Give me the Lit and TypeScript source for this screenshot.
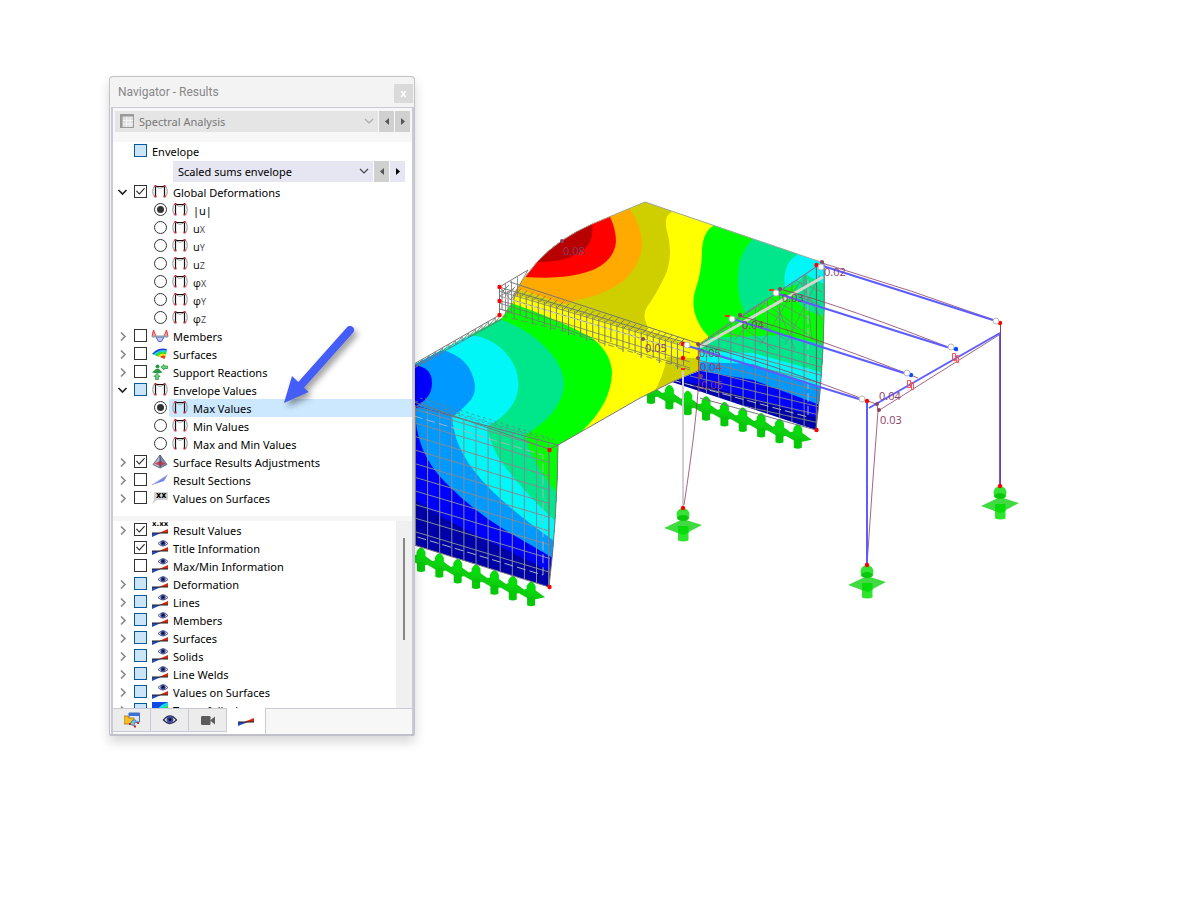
import { LitElement, html, svg, css, nothing } from "lit";
import { customElement } from "lit/decorators.js";
import { classMap } from "lit/directives/class-map.js";

type Kind = "frame" | "members" | "surfaces" | "support" | "pyramid" | "section" | "valuesxx" | "xxx" | "eye" | "rainbow";
interface Row {
  text: string;
  sub?: string;
  icon: Kind;
  open?: boolean;
  leaf?: boolean;
  radio?: string;
  state?: "on" | "off" | "mixed";
  selected?: boolean;
}

const upper: Row[] = [
  { text: "Global Deformations", icon: "frame", open: true, state: "on" },
  { text: "|u|", icon: "frame", radio: "deformation", state: "on" },
  { text: "u", sub: "X", icon: "frame", radio: "deformation" },
  { text: "u", sub: "Y", icon: "frame", radio: "deformation" },
  { text: "u", sub: "Z", icon: "frame", radio: "deformation" },
  { text: "φ", sub: "X", icon: "frame", radio: "deformation" },
  { text: "φ", sub: "Y", icon: "frame", radio: "deformation" },
  { text: "φ", sub: "Z", icon: "frame", radio: "deformation" },
  { text: "Members", icon: "members" },
  { text: "Surfaces", icon: "surfaces" },
  { text: "Support Reactions", icon: "support" },
  { text: "Envelope Values", icon: "frame", open: true, state: "mixed" },
  { text: "Max Values", icon: "frame", radio: "envelope", state: "on", selected: true },
  { text: "Min Values", icon: "frame", radio: "envelope" },
  { text: "Max and Min Values", icon: "frame", radio: "envelope" },
  { text: "Surface Results Adjustments", icon: "pyramid", state: "on" },
  { text: "Result Sections", icon: "section" },
  { text: "Values on Surfaces", icon: "valuesxx" },
];

const lower: Row[] = [
  { text: "Result Values", icon: "xxx", state: "on" },
  { text: "Title Information", icon: "eye", state: "on", leaf: true },
  { text: "Max/Min Information", icon: "eye", leaf: true },
  { text: "Deformation", icon: "eye", state: "mixed" },
  { text: "Lines", icon: "eye", state: "mixed" },
  { text: "Members", icon: "eye", state: "mixed" },
  { text: "Surfaces", icon: "eye", state: "mixed" },
  { text: "Solids", icon: "eye", state: "mixed" },
  { text: "Line Welds", icon: "eye", state: "mixed" },
  { text: "Values on Surfaces", icon: "eye", state: "mixed" },
  { text: "Type of display", icon: "rainbow", state: "mixed" },
];

const eye = svg`
  <path d="M6 3.500 Q11 -2 16 3.500 Q11 8.500 6 3.500Z" fill="#dfe3f4" stroke="#4a4d74" stroke-width=".9"/>
  <circle cx="11" cy="3.200" r="2.600" fill="#3a4aa0"/><circle cx="11" cy="3.200" r="1.300" fill="#11142e"/>`;
const wedges = svg`
  <path d="M0 11 H9 L0 15Z" fill="#2747b5"/><path d="M16 7 V11 H7Z" fill="#d6270e"/>
  <path d="M0 11 H16" stroke="#222" stroke-width="1"/>`;

const glyphs: Record<Kind, unknown> = {
  frame: svg`
    <path d="M2.500 2 Q-1 7.500 2.500 13 M13.500 2 Q17 7.500 13.500 13" fill="none" stroke="#8f8f8f"/>
    <path d="M4 2.500 Q8 6 12 2.500" fill="none" stroke="#999"/>
    <path d="M3.500 13 V2.500 H12.500 V13" fill="none" stroke="#111" stroke-width="1.200"/>
    <path d="M2.500 1h2v2h-2zM11.500 1h2v2h-2zM2.500 11.500h2v2h-2zM11.500 11.500h2v2h-2z" fill="#c9272d"/>`,
  members: svg`
    <path d="M0 8.500 L1.500 2 L4 8.500Z M16 8.500 L14.500 2 L12 8.500Z" fill="#f7b0b0" stroke="#ef2c2c"/>
    <path d="M4 9 Q8 19 12 9Z" fill="#c3c8fa" stroke="#4a55e8"/>
    <path d="M0 8.500H16" stroke="#8aa0ad" stroke-width="2"/>`,
  surfaces: svg`
    <path d="M0 8 Q6 1 15 3 L14 6 Q8 3 5 9Z" fill="#2340e0"/>
    <path d="M1 8.500 Q8 2.500 15 4.500 L14 7.500 Q8 5 6 10Z" fill="#18d7d8"/>
    <path d="M3 9 Q9 4 14.500 6.500 L13.500 9.500 Q9 7 7 11Z" fill="#3ddc2c"/>
    <path d="M6 10 Q10 6.500 14 8.500 L13 11 Q10 9 8 11Z" fill="#f6e51c"/>
    <path d="M8 11 Q11 8.500 13.500 10.500 L12.500 13Z" fill="#ee3a1c"/>`,
  support: svg`
    <circle cx="5.500" cy="2.500" r="2" fill="#2b9a45"/><path d="M0 8.500 L4 5 H7 L10.500 8.500 L5.500 9.500Z" fill="#2b9a45"/>
    <path d="M5 9.500 L2 12.500 H3.500 V15.500 H6.500 V12.500 H8Z" fill="#5edb76" stroke="#268a3b" stroke-width=".7"/>
    <path d="M9 3 L12 .5 V2 H15.500 V4.500 H12 V6Z" fill="#5edb76" stroke="#268a3b" stroke-width=".7"/>`,
  pyramid: svg`
    <path d="M8 1 L1 10.500 L8 14 L15 10.500Z" fill="#b4bad0" stroke="#48506e" stroke-width=".8"/>
    <path d="M8 1 V14 L15 10.500Z" fill="#7b83a3"/><path d="M2.500 9.500 L8 7 L13.500 9.500 L8 12Z" fill="#d3343c" opacity=".85"/>
    <path d="M8 1V14" stroke="#333a55" stroke-width=".8"/>`,
  section: svg`<path d="M0 13 L15.500 3 L12 9Z" fill="#7482f5"/><path d="M0 13 L15.500 3" stroke="#a8b1c8"/>`,
  valuesxx: svg`
    <path d="M2 2H16V10H5L0 14 L2 9Z" fill="#d2d2d2"/>
    <text x="4" y="8" font-family="DejaVu Sans, sans-serif" font-weight="bold" font-size="8">xx</text>`,
  xxx: svg`
    <text x="0" y="4" font-family="DejaVu Sans, sans-serif" font-weight="bold" font-size="7">x.xx</text>
    ${wedges}`,
  eye: svg`${eye}${wedges}`,
  rainbow: svg`
    <rect width="16" height="16" fill="#1248e8"/><path d="M2 16 Q4 4 16 0 V16Z" fill="#17d8e8"/>
    <path d="M5 16 Q8 6 16 4 V16Z" fill="#2ae32a"/><path d="M10 16 Q11 10 16 9 V16Z" fill="#f2e21a"/>`,
};

const icon = (k: Kind) => html`<svg class="icon" viewBox="0 0 16 16" aria-hidden="true">${glyphs[k]}</svg>`;

@customElement("results-tree")
class ResultsTree extends LitElement {
  static properties = { rows: { attribute: false } };
  declare rows: Row[];

  static styles = css`
    :host { display: block; }
    ul { list-style: none; margin: 0; padding: 0; }
    li { display: flex; align-items: center; height: 18px; padding-left: 2px; }
    li.child { padding-left: 41px; }
    .twist { width: 14px; height: 18px; margin-right: 5px; padding: 0; border: 0; background: none; flex: none; display: grid; place-items: center; color: #8a8a8a; }
    .twist.open { color: #222; }
    .twist svg { width: 11px; height: 11px; fill: none; stroke: currentColor; stroke-width: 1.7; }
    input { appearance: none; box-sizing: border-box; flex: none; width: 13px; height: 13px; margin: 0 2px 1px 0; border: 1px solid #333; background: #fff; display: grid; place-items: center; }
    input.mixed { background: #cce4f7; border-color: #005a9e; }
    input[type="checkbox"]:checked::before { content: ""; width: 9px; height: 8px; background: #222; clip-path: polygon(0 48%, 10% 38%, 36% 72%, 92% 4%, 100% 12%, 37% 92%); }
    input[type="radio"] { border-radius: 50%; }
    input[type="radio"]:checked::before { content: ""; width: 7px; height: 7px; border-radius: 50%; background: #333; }
    label { display: flex; align-items: center; gap: 5px; flex: 1; height: 18px; padding-left: 3px; white-space: nowrap; }
    .selected label { background: #cce8ff; border-radius: 2px 0 0 2px; }
    .icon { width: 16px; height: 16px; flex: none; overflow: visible; }
    .text { padding-top: 2px; line-height: 16px; }
    .symbol { font-family: "Open Sans", "Noto Sans", sans-serif; }
    .small { font-size: 9px; color: #444; }
  `;

  render() {
    return html`<ul>${this.rows.map((r, i) => html`
      <li class=${classMap({ child: !!r.radio, selected: !!r.selected })}>
        ${r.radio ? nothing : r.leaf ? html`<span class="twist"></span>` : html`
          <button class=${classMap({ twist: true, open: !!r.open })} aria-label=${(r.open ? "Collapse " : "Expand ") + r.text}>
            <svg viewBox="0 0 11 11"><path d=${r.open ? "M1.500 3 L5.500 7 L9.500 3" : "M4 1.500 L8 5.500 L4 9.500"}/></svg>
          </button>`}
        <input id=${"row" + i} type=${r.radio ? "radio" : "checkbox"} name=${r.radio ?? "item" + i}
          class=${classMap({ mixed: r.state === "mixed" })} .checked=${r.state === "on"} .indeterminate=${r.state === "mixed"}>
        <label for=${"row" + i}>${icon(r.icon)}<span class=${classMap({ text: true, symbol: !!r.sub })}>${r.text}${r.sub ? html`<span class="small">${r.sub}</span>` : nothing}</span></label>
      </li>`)}</ul>`;
  }
}

@customElement("results-navigator")
class ResultsNavigator extends LitElement {
  static styles = css`
    :host { display: block; box-sizing: border-box; width: 306px; border: 1px solid #c3c3c6; border-bottom: 2px solid #c0c0cb; border-radius: 4px 4px 2px 2px; background: #f3f3f3; box-shadow: 0 6px 12px rgba(0,0,0,.16); font: 11px "Noto Sans", "Open Sans", sans-serif; color: #000; }
    header { display: flex; align-items: center; height: 30px; padding: 0 1px 0 8px; }
    h1 { flex: 1; margin: 0; font: 400 12px/30px Roboto, "Noto Sans", sans-serif; color: #878787; }
    .close { width: 19px; height: 19px; margin-top: 3px; padding: 0; border: 0; background: #dadada; color: #fff; font: bold 10px "Noto Sans", sans-serif; line-height: 19px; }
    .body { margin-left: 1px; border: solid #c9c9d7; border-width: 1px 2px 0; background: #fff; }
    .bar { display: flex; gap: 1px; padding: 3px 2px 10px; background: #f7f7f7; }
    .combo { position: relative; flex: 1; display: flex; background: #e5e5e5; }
    .combo select { appearance: none; flex: 1; min-width: 0; height: 21px; border: 0; border-radius: 0; background: none; font: inherit; color: #777; padding: 0 24px 1px 24px; margin: 0; opacity: 1; }
    .combo .grid { position: absolute; left: 5px; top: 3px; width: 14px; height: 14px; }
    .combo .down { position: absolute; right: 4px; top: 7px; width: 10px; height: 6px; fill: none; stroke: #aaa; stroke-width: 1.2; }
    .step { width: 15px; height: 21px; padding: 0; border: 0; background: #d0d0d0; display: grid; place-items: center; flex: none; }
    .step svg { width: 4px; height: 7px; fill: #555; }
    .envelope { display: flex; align-items: center; height: 19px; padding-left: 21px; }
    .envelope input { appearance: none; box-sizing: border-box; width: 13px; height: 13px; margin: 0 5px 2px 0; border: 1px solid #005a9e; background: #cce4f7; }
    .scaled { display: flex; gap: 1px; margin: 0 7px 1px 60px; }
    .scaled .combo, .scaled .next { background: #e6e6f2; }
    .scaled select { padding-left: 5px; color: #000; }
    .scaled .down { stroke: #444; }
    .scaled .next svg { fill: #000; }
    .upper { padding-bottom: 9px; }
    .split { height: 5px; background: #f5f5f5; }
    .lower { display: flex; height: 187px; overflow: hidden; }
    .lower results-tree { flex: 1; }
    .track { width: 16px; background: #f0f0f0; padding-top: 17px; box-sizing: border-box; display: flex; justify-content: center; }
    .thumb { width: 2px; height: 102px; background: #868686; }
    nav { display: flex; height: 26px; background: #f7f7f7; box-sizing: border-box; border-top: 1px solid #c9c9d7; }
    nav button { width: 38px; height: 23px; box-sizing: border-box; padding: 0; border: 0; border-right: 1px solid #c9c9d7; border-bottom: 1px solid #c9c9d7; background: #ececec; display: grid; place-items: center; }
    nav .active { width: 39px; margin-top: -1px; height: 26px; background: #fff; border-bottom: 0; }
    nav svg { width: 16px; height: 16px; }
  `;

  private step(dir: "prev" | "next") {
    return html`<button class="step ${dir}" aria-label=${dir === "prev" ? "Previous" : "Next"}>
      <svg viewBox="0 0 4 7"><path d=${dir === "prev" ? "M4 0V7L0 3.500Z" : "M0 0V7L4 3.500Z"}/></svg></button>`;
  }

  render() {
    const down = html`<svg class="down" viewBox="0 0 10 6"><path d="M1 1 L5 5 L9 1"/></svg>`;
    return html`
      <header><h1>Navigator - Results</h1><button class="close" aria-label="Close">x</button></header>
      <div class="body">
        <div class="bar">
          <div class="combo">
            <svg class="grid" viewBox="0 0 14 14"><rect x=".5" y=".5" width="13" height="13" fill="#dedede" stroke="#9a9a9a"/><path d="M0 1.500H14M1.500 0V14" stroke="#9a9a9a" stroke-width="2"/><path d="M6.500 3V13M10 3V13M3 6.500H13M3 10H13" stroke="#f5f5f5"/></svg>
            <select aria-label="Analysis"><option>Spectral Analysis</option></select>${down}
          </div>${this.step("prev")}${this.step("next")}
        </div>
        <div class="envelope"><input id="env" type="checkbox" .indeterminate=${true}><label for="env">Envelope</label></div>
        <div class="scaled">
          <div class="combo"><select aria-label="Envelope type"><option>Scaled sums envelope</option></select>${down}</div>
          ${this.step("prev")}${this.step("next")}
        </div>
        <results-tree class="upper" .rows=${upper}></results-tree>
        <div class="split"></div>
        <div class="lower"><results-tree .rows=${lower}></results-tree><div class="track"><div class="thumb"></div></div></div>
        <nav>
          <button aria-label="Data"><svg viewBox="0 0 16 16"><path d="M5 1H15.500V10H5Z" fill="#dbe6fb" stroke="#3f70cf"/><path d="M5 1H16V4H5Z" fill="#3f70cf"/><path d="M0 4H4L5 6H10V12H0Z" fill="#f4bd27" stroke="#a97606" stroke-width=".8"/><path d="M6 12Q10 4 14 11L11 10 10 14Z" fill="#77c3e5" stroke="#316f91" stroke-width=".7"/><path d="M5 11h2v2H5zM13 10h2v2h-2zM10 13.500h2v2h-2z" fill="#d9271b"/></svg></button>
          <button aria-label="Display"><svg viewBox="0 0 16 16"><path d="M1.500 8Q8 0 14.500 8Q8 15 1.500 8Z" fill="#e9ecf8" stroke="#2d3159" stroke-width="1.300"/><circle cx="8" cy="7.500" r="3.400" fill="#3c4b9b"/><circle cx="8" cy="7.500" r="1.500" fill="#0d1026"/></svg></button>
          <button aria-label="Views"><svg viewBox="0 0 16 16"><rect x="1" y="4" width="9.500" height="9" rx="1.200" fill="#5c5c5c"/><path d="M10 8.500 L15 4.500V12.500Z" fill="#5c5c5c"/></svg></button>
          <button class="active" aria-label="Results"><svg viewBox="0 0 16 16"><path d="M0 9H10L0 13Z" fill="#2747b5"/><path d="M16 5V9H6Z" fill="#d6270e"/><path d="M0 9H16" stroke="#222"/></svg></button>
        </nav>
      </div>`;
  }
}

const seq = (n: number) => Array.from({ length: n }, (_, i) => i);
const C = { dark: "#b80000", red: "#ff0000", orange: "#ffaa00", olive: "#cfcf00", yellow: "#ffff00", green: "#00ff00", teal: "#00e68a", cyan: "#00f7f7", sky: "#0099ff", blue: "#0000ff", navy: "#0000a8" };

const roof = "M511 308 L516 290 L525 277 L537 262 Q548 250 562 240.500 Q576 231 592 224 L645 202 L824 263 L819 266 L699 345 L690 356Z";
const front = "M414 365 L502 318 L512 302 L520 290 L600 316 L686 344 L700 350 L700 370 L672 382 L640 398 L558 445 L500 431 L414 406Z";
const wall = "M414 405 L500 430 L558 445 Q557 520 549 587 L414 545Z";
const side = "M672 382 L700 371 L699 345 L819 265 L824 263 Q826 350 816 430Z";

const line = (x1: number, y1: number, x2: number, y2: number) => svg`<path d=${`M${x1} ${y1}L${x2} ${y2}`}/>`;
const dots = (pts: number[][], color: string, r: number) =>
  pts.map(([x, y]) => svg`<circle cx=${x} cy=${y} r=${r} fill=${color}/>`);
const seat = (x: number, y: number) => svg`
  <path d=${`M${x - 14} ${y + 6}L${x} ${y + 1}L${x + 14} ${y + 11}L${x} ${y + 14}Z`} fill="#0fce12"/>
  <path d=${`M${x - 4} ${y + 10}h8v9q-4 2-8 0Z`} fill="#04c808"/>
  <path d=${`M${x - 4.5} ${y}q4.500-9 9 0v6q-4.500 3-9 0Z`} fill="#06da0a"/>`;
const foot = (x: number, y: number) => svg`
  <path d=${`M${x - 19} ${y + 20}L${x} ${y + 11}L${x + 19} ${y + 17}L${x} ${y + 27}Z`} fill="#42da42"/>
  <ellipse cx=${x} cy=${y + 6.5} rx="6.500" ry="6.500" fill="#35e335"/><ellipse cx=${x} cy=${y + 10} rx="6" ry="3" fill="#0ac80c"/>
  <path d=${`M${x - 5} ${y + 18}h10.500v14.500q-5 2-10.500 0Z`} fill="#2ee52e"/><path d=${`M${x - 5} ${y + 18}h10.500v7l-5 2-5.500-2Z`} fill="#06dc09"/>`;

@customElement("model-view")
class ModelView extends LitElement {
  static styles = css`
    :host { display: block; }
    .scene { display: block; width: 100%; height: 100vh; }
    .tag { font: 11px "Open Sans", "Noto Sans", sans-serif; fill: #8d3c66; }
  `;

  render() {
    const tags: [string, number, number][] = [
      ["0.08", 563, 255], ["0.02", 824, 276], ["0.03", 782, 302], ["0.04", 742, 329], ["0.05", 645, 352],
      ["0.05", 699, 357], ["0.04", 700, 371], ["0.05", 701, 389], ["0.04", 879, 400], ["0.03", 880, 424],
    ];
    return html`<svg class="scene" viewBox="0 0 1200 900" preserveAspectRatio="xMinYMin meet" role="img" aria-label="Deformed structural model">
      <defs>
        <clipPath id="roof"><path d=${roof}/></clipPath><clipPath id="front"><path d=${front}/></clipPath>
        <clipPath id="wall"><path d=${wall}/></clipPath><clipPath id="side"><path d=${side}/></clipPath>
      </defs>
      ${seq(9).map((i) => seat(651 + 18.35 * i, 384 + 5.6 * i))}
      ${seq(7).map((i) => seat(421 + 18.35 * i, 552 + 5.7 * i))}

      <g clip-path="url(#side)">
        <rect x="660" y="250" width="180" height="190" fill=${C.navy}/>
        <path d="M660 250H840V423L816 417L715 388L660 376Z" fill=${C.blue}/>
        <path d="M660 250H840V412L820 405L753 380L700 371Z" fill=${C.sky}/>
        <path d="M660 250H840V392L822 387L753 364L700 362Z" fill=${C.cyan}/>
        <path d="M660 250H840V379L823 373L800 366L753 353L700 351Z" fill=${C.teal}/>
        <path d="M700 338L783 335L824 344V316Q806 312 798 302Q792 292 797 284L760 300L740 313L707 336Z" fill=${C.green}/>
        <path d="M797 283L805 274L826 285V263L800 270Z" fill=${C.cyan}/>
      </g>

      <g clip-path="url(#roof)">
        <rect x="500" y="195" width="330" height="165" fill=${C.cyan}/>
        <path d="M500 195H797V255Q782 264 785 287L790 360H500Z" fill=${C.teal}/>
        <path d="M500 195H752V240Q738 254 738 277Q737 297 745 314V360H500Z" fill=${C.green}/>
        <path d="M500 195H713V226Q703 232 702 250Q702 268 697 285Q691 300 695 314Q699 327 708 336V360H500Z" fill=${C.yellow}/>
        <path d="M500 195H672V212Q663 216 667 231Q674 255 665 276Q654 298 647 307Q642 315 647 325V342H500Z" fill=${C.olive}/>
        <path d="M500 195H630V209Q643 228 642 247Q639 268 622 282Q602 296 577 300L560 306H500Z" fill=${C.orange}/>
        <path d="M525 277Q570 280 595 269Q614 260 616 242Q616 229 610 217V200H500V277Z" fill=${C.red}/>
        <path d="M536 262Q562 263 579 253Q595 244 592 224V200H500V262Z" fill=${C.dark}/>
      </g>

      <g clip-path="url(#front)">
        <rect x="410" y="280" width="300" height="180" fill=${C.yellow}/>
        <path d="M514 282L700 342V350L650 335L517 295Z" fill=${C.olive}/>
        <path d="M667 357L700 358V375L652 396Q664 375 667 357Z" fill=${C.olive}/>
        <path d="M511 303Q560 320 592 338Q611 352 612 373Q611 404 582 431L560 450H410V303Z" fill=${C.green}/>
        <path d="M502 320Q530 330 548 350Q564 367 564 386Q561 413 527 434L510 450H410V320Z" fill=${C.teal}/>
        <path d="M477 336Q500 342 511 360Q520 373 518 390Q514 412 488 426L470 440H410V336Z" fill=${C.cyan}/>
        <path d="M446 351Q466 358 472 374Q480 393 467 404Q460 412 452 417H410V351Z" fill=${C.sky}/>
        <path d="M414 365Q432 367 432 383Q432 399 414 407Z" fill=${C.blue}/>
      </g>

      <g clip-path="url(#wall)">
        <rect x="410" y="400" width="150" height="190" fill=${C.navy}/>
        <path d="M410 395V496Q450 524 493 543L560 576V395Z" fill=${C.blue}/>
        <path d="M415 408Q415 452 445 482Q472 510 505 530L560 562V395Z" fill=${C.sky}/>
        <path d="M452 415Q453 444 475 472Q498 502 560 545V395Z" fill=${C.cyan}/>
        <path d="M488 425Q489 446 503 464Q527 496 560 525V395Z" fill=${C.teal}/>
        <path d="M525 436Q533 464 560 497V395Z" fill=${C.green}/>
        <g stroke="#838b93" stroke-width="1" fill="none">
          ${seq(12).map((i) => line(415.5 + 12.1 * i, 400, 415.5 + 12.1 * i, 590))}
          ${seq(10).map((i) => line(414, 409 + 13.600 * i, 550, 449 + 13.700 * i))}
        </g>
        <path d="M414 416L543 455V575L414 536" fill="none" stroke="#aab2ba" stroke-dasharray="9 4"/>
      </g>

      <g clip-path="url(#side)" fill="none" stroke="#7d8087">
        ${seq(10).map((i) => line(706.5 + 12.2 * i, 250, 706.5 + 12.2 * i, 440))}
        ${seq(9).map((i) => line(690, 322 + 9 * i, 824, 360 + 8 * i))}
        <path d="M732 320L775 350M745 313L786 340M758 306L798 330M770 298L810 320M784 290L820 305M795 280L822 292M735 340L765 303L822 345M760 345L800 282L822 320M785 345L820 275M775 300L795 350M805 272L812 340" stroke-width=".8"/>
        <path d="M672 380L808 417V280" stroke="#b0b5bb" stroke-dasharray="9 4"/>
        <path d="M816.500 265V430" stroke="#705f68"/>
      </g>

      <g fill="none" stroke="#77777a" stroke-width="1">
        <path d="M525 277L537 262Q548 250 562 240.500Q576 231 592 224L645 202L824 263" stroke="#a8a8a0"/>
        <path d="M700 370L672 382L640 398L558 445L414 406M558 445Q557 520 549 587L414 545M824 263Q826 350 816 430L700 398M699 345L819 265"/>
        <path d="M414 402L549 449L558 445M549 449V587M499.500 287V315L414 364M499.500 287L528 270M502 319L414 368"/>
        ${seq(13).map((i) => svg`<path d=${`M${416 + 6.6 * i} ${363 - 3.75 * i}l0 4l6.600 -7.700`} stroke-width=".8"/>`)}
        <path d="M499.500 287L511 300L528 270M505.500 284V316M511.500 281V314M517.500 277V296M499.500 296L514 289M499.500 301L513 304M499.500 309L511 312" stroke-width=".8"/>
        <path d="M499 287L690 344M510 282L700 344" />
        <path d="M499 291L690 348M499 296L690 353M499 303L690 362M500 309L690 368" stroke-width=".8"/>
        <path d="M502 316L560 330 690 370" stroke-dasharray="6 4" stroke-width=".8"/>
        ${seq(31).map((i) => line(502 + 6.050 * i, 289 + 1.850 * i, 502 + 6.050 * i, Math.round(309 + 1.85 * i + (i % 3) * 3)))}
        ${seq(30).map((i) => line(503 + 6.050 * i, 291 + 1.850 * i, 509 + 6.050 * i, 285 + 1.850 * i))}
        <path d="M505 298L683 351" stroke="#d7d7c9" stroke-dasharray="5 2"/>
      </g>
      <g fill="none" stroke="#777d86" stroke-width=".7" stroke-dasharray="3 3">
        <path d="M415 401L550 440M420 398L556 440M418 404L540 438M425 398L460 414"/>
        ${seq(11).map((i) => line(417 + 12 * i, 407 + 3.400 * i, 424 + 12 * i, 402 + 3.400 * i))}
      </g>

      <path d="M683 371V508" stroke="#d0d0d0" stroke-width="2"/><path d="M700 347L823 277" stroke="#d6d6ce" stroke-width="3"/>
      <g fill="none" stroke="#8b3e64" stroke-width=".8">
        <path d="M822 263Q912 290 1000 322M780 289Q850 308 958 351M740 316Q810 335 918 378M698 344Q770 363 876 404"/>
        <path d="M878 411L999 335M877 404L878 411Q872 490 867 565M698 345L699 375Q697 420 684 505M699 345V392"/>
        <path d="M699 344L732 321L777 293L822 263" stroke="#91727e"/>
      </g>
      <g fill="none" stroke="#5d5dff" stroke-width="2">
        <path d="M823 266L996 321M776 293L950 348M733 319L907 374M688 346L862 400M869 408L1000 333M867 402V565"/>
        <path d="M1000 333V486"/>
      </g>
      <path d="M1000.500 323V486" stroke="#8b3e64"/>
      <g fill="none" stroke="#ff5050"><path d="M952.500 353.500h3v7h-3zM956.500 355.500h2v7h-2zM907.500 380.500h3v7h-3zM911.500 382.500h2v7h-2z"/></g>
      ${dots([[822, 262], [780, 289], [740, 315], [698, 344], [698, 358], [701, 376], [562, 241], [643, 339], [877, 404], [879, 410]], "#8b4360", 2)}
      ${foot(683, 508)}${foot(867, 565)}${foot(1000, 486)}
      ${dots([[499.500, 287], [499.500, 301], [499.500, 315], [683, 344], [683, 358], [816.500, 265], [816.500, 430], [549.500, 450], [549.500, 587], [683, 508], [867, 401], [867, 565], [1000, 323], [1000, 486]], "#ff0000", 2.2)}
      <path d="M769 290h5M725 316h5M681 369h4" stroke="#ff2a00" stroke-width="2"/>
      ${dots([[956, 349], [911, 375]], "#0848ff", 2.2)}
      <g stroke="#b8b8b8">${dots([[821, 267], [776, 293], [732, 319], [687, 345], [996, 321], [951, 347], [907, 373], [862, 399]], "#ffffff", 3)}</g>
      ${tags.map(([t, x, y]) => svg`<text class="tag" x=${x} y=${y}>${t}</text>`)}
    </svg>`;
  }
}

@customElement("app-root")
class AppRoot extends LitElement {
  static styles = css`
    :host { display: block; position: relative; min-height: 100vh; background: #fff; overflow: hidden; }
    .panel { position: absolute; left: 109px; top: 76px; }
    .pointer { position: absolute; left: 274px; top: 316px; width: 96px; height: 100px; filter: drop-shadow(3px 4px 3px rgba(0,0,0,.4)); pointer-events: none; }
  `;

  render() {
    return html`
      <model-view></model-view>
      <results-navigator class="panel"></results-navigator>
      <svg class="pointer" viewBox="0 0 96 100" aria-hidden="true">
        <path d="M76 14 L27 69" stroke="#435df6" stroke-width="8" stroke-linecap="round"/>
        <path d="M10 87 L18 60 L34.500 76Z" fill="#435df6"/>
      </svg>`;
  }
}
